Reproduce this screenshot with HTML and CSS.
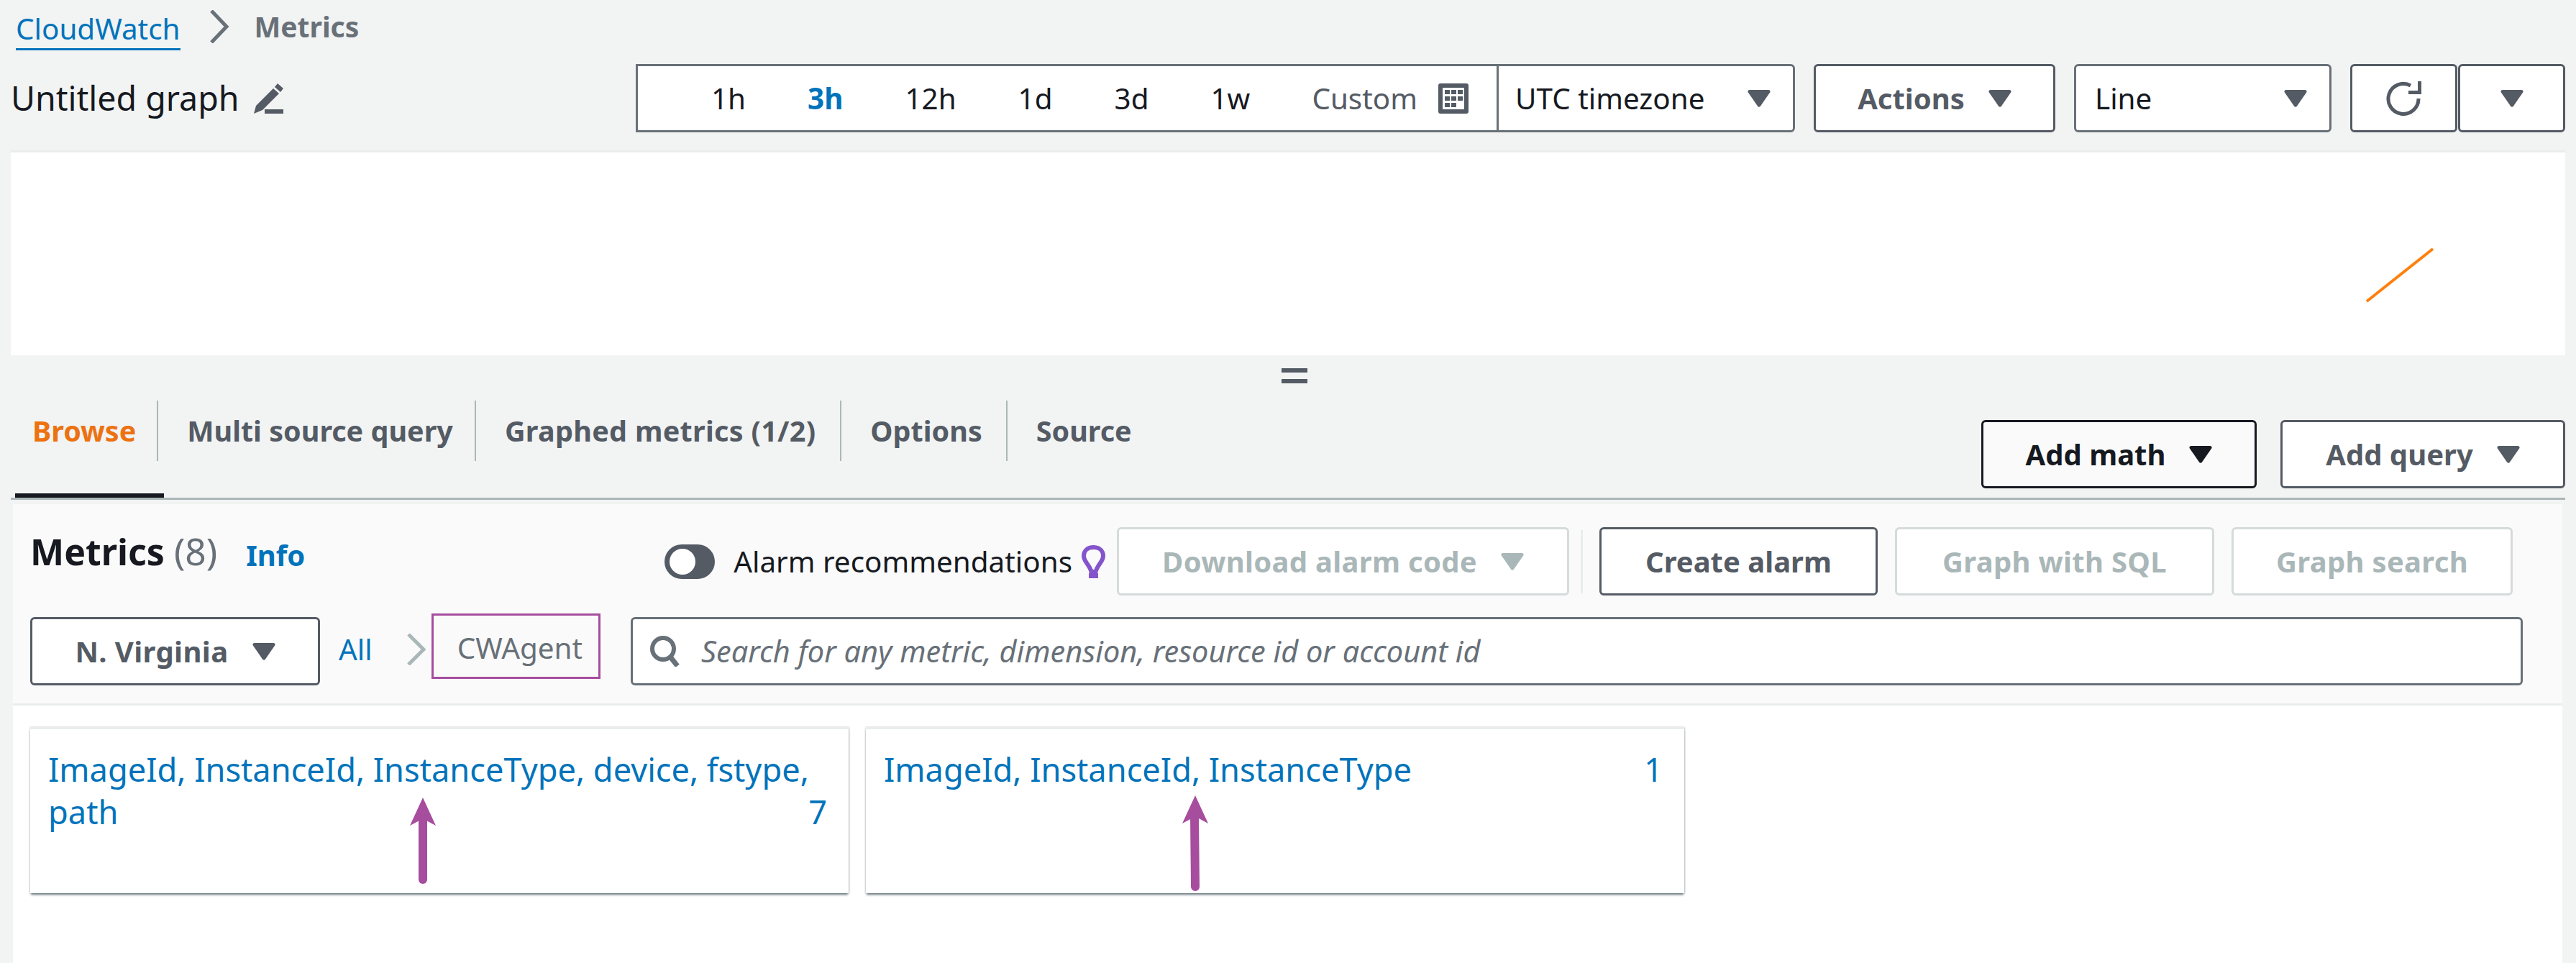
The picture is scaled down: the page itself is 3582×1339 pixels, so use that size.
FILE: index.html
```html
<!DOCTYPE html>
<html lang="en">
<head>
    <meta charset="UTF-8">
    <title>Metrics | CloudWatch</title>
    <link rel="stylesheet" href="styles.css">
</head>
<body>

<nav class="breadcrumb">
    <a class="link crumb-link">CloudWatch</a>
    <svg class="crumb-sep" viewBox="0 0 27 46"><path d="M3 1 L24 23 L3 45" fill="none" stroke="#687078" stroke-width="5"/></svg>
    <span class="crumb-current">Metrics</span>
</nav>

<div class="toolbar">
    <div class="graph-title">
        <span>Untitled graph</span>
        <svg class="icon-edit" viewBox="0 0 42 42"><path d="M34 0 L42 7 L38 12 L30 5Z M28 7 L36 14 L13 37 L1 42 L4 31Z M16 36 H42 V42 H16Z" fill="#545b64"/></svg>
    </div>
    <div class="controls">
        <div class="range">
            <span class="range-item">1h</span>
            <span class="range-item active">3h</span>
            <span class="range-item">12h</span>
            <span class="range-item">1d</span>
            <span class="range-item">3d</span>
            <span class="range-item">1w</span>
            <span class="range-custom">Custom</span>
            <svg class="icon-cal" viewBox="0 0 42 42"><rect width="42" height="42" rx="3" fill="#545b64"/><rect x="6" y="6" width="30" height="30" fill="#fff"/><path d="M9 9h7v6H9z M18 9h7v6h-7z M27 9h7v6h-7z M9 18h7v6H9z M18 18h7v6h-7z M27 18h7v6h-7z M9 27h7v6H9z M18 27h7v6h-7z" fill="#545b64"/></svg>
        </div>
        <div class="select tz">
            <span>UTC timezone</span>
            <svg class="caret" viewBox="0 0 32 24"><use href="#caret"/></svg>
        </div>
        <button class="btn actions">Actions <svg class="caret" viewBox="0 0 32 24"><use href="#caret"/></svg></button>
        <div class="select line-select">
            <span>Line</span>
            <svg class="caret" viewBox="0 0 32 24"><use href="#caret"/></svg>
        </div>
        <div class="split">
            <button class="btn split-btn">
                <svg class="icon-refresh" viewBox="0 0 49 48"><path d="M34 6 A21 21 0 1 0 45 24" fill="none" stroke="#545b64" stroke-width="5"/><path d="M49 0 V18 H31 V13 H44 V0Z" fill="#545b64"/></svg>
            </button>
            <button class="btn split-btn"><svg class="caret" viewBox="0 0 32 24"><use href="#caret"/></svg></button>
        </div>
    </div>
</div>

<div class="chart">
    <svg class="chart-line" viewBox="0 0 100 80"><line x1="4" y1="77" x2="96" y2="4" stroke="#ff7f0e" stroke-width="4"/></svg>
</div>

<div class="handle"><span class="handle-icon"></span></div>

<div class="tabs-row">
    <div class="tabs">
        <span class="tab active">Browse</span>
        <span class="tab tab-tight">Multi source query</span>
        <span class="tab tab-wide">Graphed metrics (1/2)</span>
        <span class="tab">Options</span>
        <span class="tab">Source</span>
    </div>
    <div class="tab-actions">
        <button class="btn btn-dark">Add math <svg class="caret" viewBox="0 0 32 24"><use href="#caret"/></svg></button>
        <button class="btn">Add query <svg class="caret" viewBox="0 0 32 24"><use href="#caret"/></svg></button>
    </div>
</div>

<section class="panel">
    <div class="panel-head">
        <h2 class="panel-title">Metrics <span class="count">(8)</span></h2>
        <a class="link info">Info</a>
        <div class="panel-actions">
            <span class="toggle"></span>
            <span class="toggle-label">Alarm recommendations</span>
            <svg class="icon-bulb" viewBox="0 0 33 46"><path d="M16.5 3 C8 3 3 8 3 15 C3 23 11 27 13.5 37 H19.5 C22 27 30 23 30 15 C30 8 25 3 16.5 3Z" fill="none" stroke="#8454cc" stroke-width="6"/><rect x="10" y="39" width="13" height="7" fill="#8454cc"/></svg>
            <button class="btn disabled btn-download">Download alarm code <svg class="caret" viewBox="0 0 32 24"><use href="#caret"/></svg></button>
            <span class="action-sep"></span>
            <button class="btn btn-create">Create alarm</button>
            <button class="btn disabled btn-sql">Graph with SQL</button>
            <button class="btn disabled btn-search">Graph search</button>
        </div>
    </div>
    <div class="panel-filter">
        <button class="btn region">N. Virginia <svg class="caret" viewBox="0 0 32 24"><use href="#caret"/></svg></button>
        <a class="link all">All</a>
        <svg class="filter-sep" viewBox="0 0 27 44"><path d="M3 1 L24 22 L3 43" fill="none" stroke="#aab7b8" stroke-width="5"/></svg>
        <span class="namespace">CWAgent</span>
        <div class="search">
            <svg class="icon-search" viewBox="0 0 42 43"><circle cx="18" cy="18" r="15" fill="none" stroke="#687078" stroke-width="6"/><path d="M27 28 L38 42" stroke="#687078" stroke-width="7"/></svg>
            <span>Search for any metric, dimension, resource id or account id</span>
        </div>
    </div>
</section>

<section class="cards">
    <div class="card">
        <a class="card-name">ImageId, InstanceId, InstanceType, device, fstype, path</a>
        <span class="card-count">7</span>
        <svg class="arrow arrow-one" viewBox="0 0 36 120"><use href="#arrow-head"/><line x1="18" y1="30" x2="18" y2="114" stroke="#a64d9e" stroke-width="12" stroke-linecap="round"/></svg>
    </div>
    <div class="card">
        <a class="card-name">ImageId, InstanceId, InstanceType</a>
        <span class="card-count">1</span>
        <svg class="arrow arrow-two" viewBox="0 0 36 133"><use href="#arrow-head"/><line x1="17" y1="30" x2="18" y2="127" stroke="#a64d9e" stroke-width="12" stroke-linecap="round"/></svg>
    </div>
</section>

<svg class="defs" width="0" height="0">
    <defs>
        <path id="caret" d="M3 0 H29 Q32 0 31.5 3 L18 22.5 Q16 25 14 22.5 L0.5 3 Q0 0 3 0Z" fill="currentColor"/>
        <path id="arrow-head" d="M18 0 L36 39 L23 32 H13 L0 39Z" fill="#a64d9e"/>
    </defs>
</svg>

</body>
</html>
```

FILE: styles.css
```css
* { box-sizing: border-box; }
body { margin: 0; height: 1339px; overflow: hidden; background: #f2f3f3; color: #16191f;
    font-family: "Noto Sans", "Open Sans", sans-serif; font-size: 40.4px; line-height: 57px; }
svg { display: block; flex: none; }
.defs { position: absolute; }
.link { color: #0073bb; }

.breadcrumb { display: flex; align-items: center; height: 89px; padding: 0 0 16px 22px; }
.crumb-link { border-bottom: 3px solid #0073bb; line-height: 54px; margin-top: 9px; }
.crumb-sep { width: 27px; height: 46px; margin: 0 36px 0 40px; }
.crumb-current { font-size: 39px; font-weight: 700; color: #687078; }

.toolbar { display: flex; justify-content: space-between; height: 95px; padding: 0 15px 0 15px; }
.graph-title { display: flex; align-items: center; gap: 19px; font-size: 46.5px; }
.icon-edit { width: 42px; height: 42px; }
.controls { display: flex; gap: 26px; }

.range { display: flex; align-items: center; width: 1197px; padding-left: 102px;
    background: #fff; border: 3px solid #687078; border-right: 0; margin-right: -26px; }
.range-item { margin-right: 86px; }
.range-item.active { color: #0073bb; font-weight: 700; }
.range-custom { color: #545b64; margin-right: 29px; }
.icon-cal { width: 42px; height: 42px; }

.select { display: flex; align-items: center; justify-content: space-between;
    background: #fff; border: 3px solid #687078; border-radius: 0 6px 6px 0; color: #16191f; }
.tz { width: 415px; padding: 0 31px 0 23px; }
.line-select { width: 358px; border-radius: 6px; padding: 0 31px 0 26px; }
.caret { width: 32px; height: 24px; color: #545b64; }

.btn { display: inline-flex; align-items: center; justify-content: center; gap: 33px; height: 95px; padding: 0;
    background: #fff; border: 3px solid #545b64; border-radius: 6px; color: #545b64;
    font: 700 40px "Noto Sans", "Open Sans", sans-serif; }
.actions { width: 336px; }
.split { display: flex; gap: 1px; }
.split-btn { width: 149px; }
.icon-refresh { width: 49px; height: 48px; }

.chart { height: 285px; margin: 25px 15px 0; background: #fff; border-top: 3px solid #eaeded; position: relative; }
.chart-line { position: absolute; left: 3272px; top: 130px; width: 100px; height: 80px; }

.handle { display: flex; justify-content: center; height: 63px; padding: 18px 0 0 18px; }
.handle-icon { width: 36px; height: 21px; border-top: 6px solid #545b64; border-bottom: 6px solid #545b64; }

.tabs-row { display: flex; justify-content: space-between; height: 138px; margin: 0 15px;
    border-bottom: 3px solid #aab7b8; }
.tabs { display: flex; align-items: flex-start; padding-left: 6px; }
.tab { display: flex; align-items: center; height: 84px; padding: 0 33px 0 40px; font-size: 39.5px; font-weight: 700; color: #545b64;
    border-right: 2px solid #aab7b8; position: relative; white-space: nowrap; }
.tab:last-child { border-right: 0; }
.tab.active { color: #ec7211; padding: 0 29px 0 24px; }
.tab.active::after { content: ""; position: absolute; left: 0; right: -10px; top: 129px; height: 6px; background: #16191f; }
.tab-tight { padding-right: 30px; }
.tab-wide { letter-spacing: .3px; padding-right: 34px; }
.tab-actions { display: flex; gap: 33px; padding-top: 27px; }
.tab-actions .btn { width: 396px; }
.btn-dark.btn { width: 383px; background: #fafafa; border-color: #16191f; color: #16191f; }
.btn-dark .caret { color: #16191f; }

.panel { height: 280px; margin: 6px 19px 0 18px; padding: 32px 55px 0 24px; background: #fafafa; border-bottom: 3px solid #eaeded; }
.panel-head { display: flex; align-items: center; height: 95px; padding-right: 14px; }
.panel-title { margin: 0 40px 0 0; font-size: 50px; line-height: 70px; font-weight: 700; position: relative; top: -14px; }
.count { font-size: 51.5px; font-weight: 400; color: #687078; }
.info { font-size: 40px; font-weight: 700; position: relative; top: -9px; }
.panel-actions { display: flex; align-items: center; margin-left: auto; }
.toggle { width: 70px; height: 48px; border-radius: 24px; background: #545b64; position: relative; margin-right: 26px; }
.toggle::after { content: ""; position: absolute; left: 7px; top: 6px; width: 36px; height: 36px; border-radius: 50%; background: #fff; }
.toggle-label { margin-right: 13px; }
.icon-bulb { width: 33px; height: 46px; margin-right: 16px; }
.btn.disabled { color: #aab7b8; border-color: #d5dbdb; letter-spacing: .3px; }
.btn.disabled .caret { color: #aab7b8; }
.btn-download { width: 629px; }
.btn-create { width: 387px; }
.btn-sql { width: 444px; letter-spacing: .5px; }
.btn-search { width: 391px; }
.action-sep { width: 3px; height: 88px; margin: 0 23px 0 16px; background: #eaeded; }
.panel-actions .btn + .btn { margin-left: 24px; }

.panel-filter { display: flex; margin-top: 30px; }
.region { width: 403px; letter-spacing: .4px; }
.all { margin: 0 47px 0 26px; line-height: 90px; height: 95px; }
.filter-sep { width: 27px; height: 44px; margin: 23px 8px 0 0; }
.namespace { height: 91px; margin-top: -5px; padding: 0 22px 0 33px; line-height: 90px; border: 3px solid #a64d9e; color: #687078; }
.search { flex: 1; display: flex; align-items: center; gap: 29px; height: 95px; margin-left: 42px; padding-left: 24px;
    background: #fff; border: 3px solid #687078; border-radius: 6px; color: #687078; font-size: 41.5px; font-style: italic; }
.icon-search { width: 42px; height: 43px; }

.cards { display: flex; gap: 24px; height: 358px; margin: 0 19px 0 18px; padding: 30px 24px 0; background: #fff; }
.card { display: flex; width: 1138px; height: 231px; padding: 26px 30px 0 25px; position: relative; background: #fff;
    font-size: 45.2px;
    border-top: 3px solid #eaeded; box-shadow: 0 3px 3px -1px rgba(0, 28, 36, .6), 1px 0 2px rgba(0, 28, 36, .2), -1px 0 2px rgba(0, 28, 36, .1); }
.card-name { flex: 1; margin-right: -14px; color: #0073bb; line-height: 59px; align-self: flex-start; }
.card-count { color: #0073bb; line-height: 59px; align-self: flex-start; }
.card:first-child .card-count { margin-top: 59px; }
.arrow { position: absolute; width: 36px; }
.arrow-one { left: 528px; top: 95px; height: 120px; }
.arrow-two { left: 440px; top: 92px; height: 133px; }
```
